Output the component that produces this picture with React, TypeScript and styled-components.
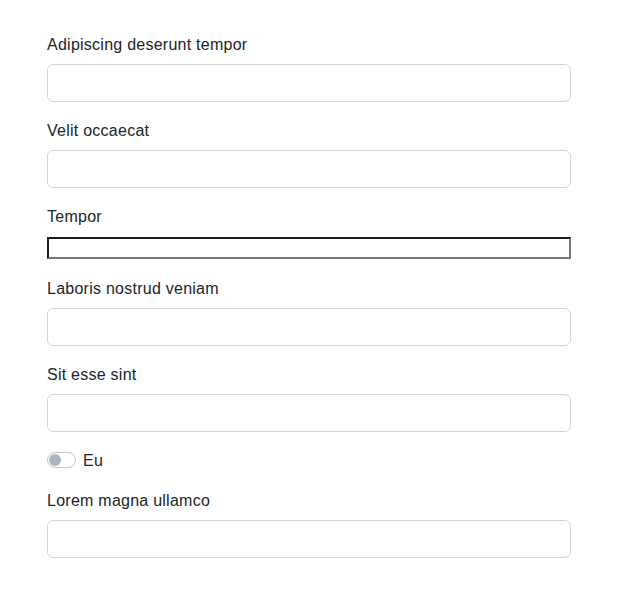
import React from "react";
import styled, { createGlobalStyle } from "styled-components";

const GlobalStyle = createGlobalStyle`
  *, *::before, *::after {
    box-sizing: border-box;
  }

  body {
    margin: 0;
    background: #fff;
    color: #212529;
    font-family: "Liberation Sans", Arial, sans-serif;
    font-size: 16px;
    line-height: 1.5;
  }
`;

interface Field {
  label: string;
  kind: "text" | "plain" | "switch";
}

const fields: Field[] = [
  { label: "Adipiscing deserunt tempor", kind: "text" },
  { label: "Velit occaecat", kind: "text" },
  { label: "Tempor", kind: "plain" },
  { label: "Laboris nostrud veniam", kind: "text" },
  { label: "Sit esse sint", kind: "text" },
  { label: "Eu", kind: "switch" },
  { label: "Lorem magna ullamco", kind: "text" },
];

const App: React.FC = () => {
  return (
    <>
      <GlobalStyle />
      <Form>
        {fields.map((field) =>
          field.kind === "switch" ? (
            <SwitchRow key={field.label}>
              <Switch type="checkbox" />
              <SwitchLabel>{field.label}</SwitchLabel>
            </SwitchRow>
          ) : (
            <Group key={field.label}>
              <Label>{field.label}</Label>
              {field.kind === "text" ? <TextInput type="text" /> : <PlainInput type="text" />}
            </Group>
          )
        )}
      </Form>
    </>
  );
};

export default App;

const Form = styled.form`
  padding: 32px 47px;
  display: flex;
  flex-direction: column;
  gap: 16px;
`;

const Group = styled.div`
  display: flex;
  flex-direction: column;
`;

const Label = styled.label`
  display: block;
  height: 24px;
  padding-top: 1px;
  margin-bottom: 8px;
  letter-spacing: 0.25px;
`;

const TextInput = styled.input`
  display: block;
  width: 100%;
  height: 38px;
  padding: 6px 12px;
  font: inherit;
  color: #212529;
  background: #fff;
  border: 1px solid #d3d7dc;
  border-radius: 6px;
  outline: none;
`;

const PlainInput = styled.input`
  display: block;
  width: 100%;
  height: 22px;
  margin: 1px 0;
  padding: 1px 2px;
  background: #fff;
  border-width: 2px;
  border-style: solid;
  border-color: #1b1b1b #767676 #767676 #1b1b1b;
  outline: none;
`;

const SwitchRow = styled.div`
  display: flex;
  align-items: center;
  gap: 7px;
  height: 24px;
`;

const Switch = styled.input`
  appearance: none;
  margin: 0;
  width: 29px;
  height: 16px;
  border: 1px solid #c4c8cc;
  border-radius: 8px;
  background: #fff;
  position: relative;

  &::before {
    content: "";
    position: absolute;
    top: 1px;
    left: 1px;
    width: 12px;
    height: 12px;
    border-radius: 50%;
    background: #adb5bd;
  }
`;

const SwitchLabel = styled.label`
  line-height: 24px;
  padding-top: 1px;
  letter-spacing: 0.25px;
`;
